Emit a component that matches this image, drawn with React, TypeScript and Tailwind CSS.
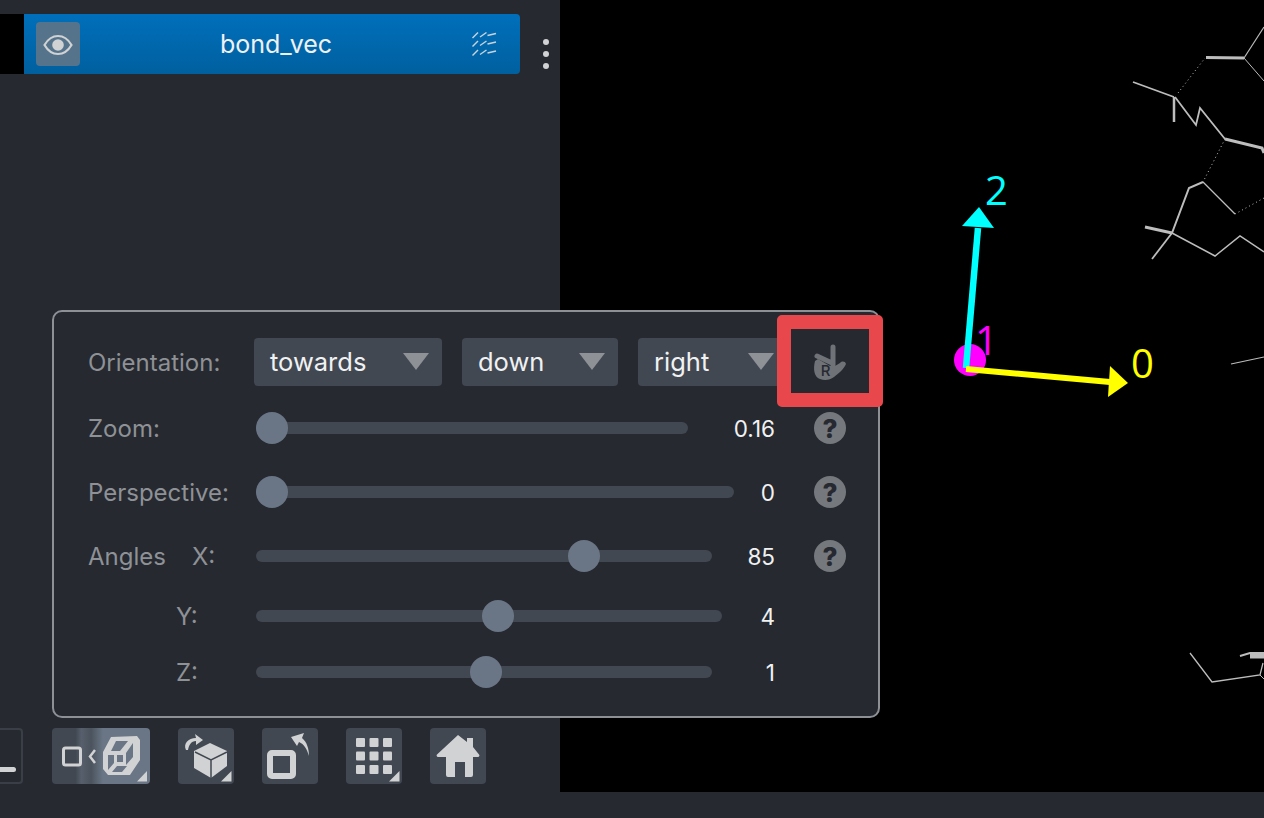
const ink = "#d1d2d3";

function Corner() {
  return <path d="M53.500 43v10.500H43z" fill={ink} />;
}

function Btn({ children, className = "w-14" }: { children: React.ReactNode; className?: string }) {
  return <div className={`h-14 rounded bg-[#414851] shrink-0 ${className}`}>{children}</div>;
}

function EyeIcon() {
  return (
    <svg width="44" height="44" viewBox="0 0 44 44">
      <path d="M8.500 23C12 17 16.500 14 22 14s10 3 13.500 9C32 29 27.500 32 22 32s-10-3-13.500-9z" fill="none" stroke={ink} strokeWidth="2.200" />
      <circle cx="22" cy="23" r="5.800" fill={ink} />
    </svg>
  );
}

function HatchIcon() {
  const rows = [0, 8.500, 17.500];
  return (
    <svg width="26" height="25" viewBox="0 0 26 25" fill="none" stroke="#c9d3dc" strokeWidth="1.400">
      {rows.map((y) => (
        <g key={y}>
          <path d={`M.500 ${y + 6}L6 ${y + .500}`} />
          <path d={`M8 ${y + 5}L14.500 ${y + .500}`} />
          <path d={`M15.500 ${y + 3.500}L24 ${y + 1.500}`} />
        </g>
      ))}
    </svg>
  );
}

function HandIcon() {
  return (
    <svg width="44" height="44" viewBox="0 0 44 44">
      <path d="M25 8v19M9 17l15 7" fill="none" stroke="#6f7378" strokeWidth="5" strokeLinecap="round" />
      <path d="M7 22C5 30 6 38 12 40C17 42 22 41 26 38C31 34 36 30 38 25C37 22 34 22 32 24L27 27H22L10 20z" fill="#6f7378" />
      <text x="17.500" y="36.500" fontSize="15" fontWeight="500" fill="#262930" textAnchor="middle" fontFamily="Inter, sans-serif">R</text>
    </svg>
  );
}

function Help() {
  return (
    <div className="w-8 h-8 rounded-full bg-[#75787d] flex items-center justify-center text-[26px] font-extrabold text-[#262930] shrink-0 ml-[39px]">
      ?
    </div>
  );
}

function Select({ label, className }: { label: string; className: string }) {
  return (
    <div className={`relative h-12 rounded bg-[#414851] pl-4 flex items-center text-[25.500px] text-[#f0f1f2] shrink-0 ${className}`}>
      {label}
      <svg width="26" height="17" viewBox="0 0 26 17" className="absolute left-[var(--tri)] top-[15px]">
        <path d="M0 0h26L13 17z" fill="#8e9196" />
      </svg>
    </div>
  );
}

const sliders = [
  { label: "Zoom:", width: "w-[432px]", pct: 0, value: "0.16", mt: "mt-[26px]", help: true, pad: "" },
  { label: "Perspective:", width: "w-[478px]", pct: 0, value: "0", mt: "mt-8", help: true, pad: "" },
  { label: "Angles", width: "w-[456px]", pct: 72, value: "85", mt: "mt-8", help: true, axis: "X:", pad: "" },
  { label: "Y:", width: "w-[466px]", pct: 52, value: "4", mt: "mt-7", help: false, pad: "pl-[88px]" },
  { label: "Z:", width: "w-[456px]", pct: 50.500, value: "1", mt: "mt-6", help: false, pad: "pl-[88px]" },
];

function Slider({ width, pct }: { width: string; pct: number }) {
  return (
    <div className={`relative h-3 rounded-full bg-[#414851] shrink-0 ${width}`}>
      <div
        className="absolute top-[-10px] w-8 h-8 rounded-full bg-[#6a7686]"
        style={{ left: `calc(${pct}% - ${pct === 0 ? 0 : 16}px)` }}
      />
    </div>
  );
}

function ControlsPanel() {
  return (
    <div className="absolute left-[52px] top-[310px] w-[828px] h-[408px] rounded-[10px] border-2 border-[#8d9196] bg-[#262930] pl-[34px] pr-8 pt-[26px]">
      <div className="flex items-center h-12">
        <div className="w-[166px] shrink-0 pt-[2px] text-[24px] text-[#8e9196]">Orientation:</div>
        <div className="flex gap-5">
          <Select label="towards" className="w-[188px] [--tri:149px]" />
          <Select label="down" className="w-[156px] [--tri:117px]" />
          <Select label="right" className="w-[150px] [--tri:110px]" />
        </div>
      </div>
      {sliders.map((s) => (
        <div key={s.label} className={`flex items-center h-8 ${s.mt}`}>
          <div className={`w-[168px] shrink-0 flex pt-[2px] text-[24px] text-[#8e9196] ${s.pad}`}>
            <span className={s.axis ? "w-[104px]" : ""}>{s.label}</span>
            {s.axis && <span>{s.axis}</span>}
          </div>
          <Slider width={s.width} pct={s.pct} />
          <div className="ml-auto pt-[2px] text-[22.500px] text-[#f0f1f2]">{s.value}</div>
          {s.help ? <Help /> : <div className="w-8 ml-[39px] shrink-0" />}
        </div>
      ))}
      {/* highlight drawn over the screenshot */}
      <div className="absolute left-[723px] top-[3px] w-[106px] h-[92px] rounded-[5px] border-[14px] border-[#e8484c] bg-[#262930] flex items-center justify-center">
        <HandIcon />
      </div>
    </div>
  );
}

function Toolbar() {
  return (
    <div className="flex items-center gap-7 mt-auto mb-2">
      <div className="w-14 h-14 ml-[-33px] mr-[1px] rounded border-2 border-[#3a3f47] relative shrink-0">
        <div className="absolute left-0 top-[37px] w-[47px] h-[5px] rounded-full bg-[#d1d2d3]" />
      </div>
      <Btn className="w-[98px] bg-[linear-gradient(90deg,#414851_0%,#414851_24%,#565f6b_30%,#4b535e_40%,#6a7686_52%,#6a7686_100%)]">
        <svg width="98" height="56" viewBox="0 0 98 56">
          <rect x="11.500" y="20" width="17" height="17" rx="2" fill="none" stroke={ink} strokeWidth="3" />
          <path d="M43 22l-5 6.500 5 6.500" fill="none" stroke={ink} strokeWidth="2.500" />
          <path
            fillRule="evenodd"
            d="M59 9L85 8L88 12V32L78 47H56L51 41V24zM64 13L59 23H68L76 13zM81 15L74 25V37L81 29zM56 27V42L62 35V27zM65 27V34H71V27zM65 38L60 44H70L75 38z"
            fill={ink}
          />
          <path d="M95 43v10.500H85z" fill={ink} />
        </svg>
      </Btn>
      <Btn>
        <svg width="56" height="56" viewBox="0 0 56 56">
          <path d="M32 15l17 8v15L33 50 16 40V23z" fill={ink} />
          <path d="M17 24l16 8 16-8M33 32v18" fill="none" stroke="#414851" strokeWidth="1.500" />
          <path d="M8 22c-3-6 2-12 10-12l-1-4 8 6-7 5v-4c-5 0-7 4-8 9z" fill={ink} />
          <Corner />
        </svg>
      </Btn>
      <Btn>
        <svg width="56" height="56" viewBox="0 0 56 56">
          <rect x="8" y="25" width="23" height="23" rx="2" fill="none" stroke={ink} strokeWidth="6" />
          <path d="M29 9l13-4-2 5c5 4 7 11 7 18-2-7-5-12-10-14l-2 4z" fill={ink} />
        </svg>
      </Btn>
      <Btn>
        <svg width="56" height="56" viewBox="0 0 56 56" fill={ink}>
          {[10, 23.500, 37].map((y) =>
            [10, 23.500, 37].map((x) => <rect key={`${x}-${y}`} x={x} y={y} width="9" height="9" rx="1" />)
          )}
          <Corner />
        </svg>
      </Btn>
      <Btn>
        <svg width="56" height="56" viewBox="0 0 56 56">
          <path d="M28 7l9 7v-4h6v9l6 7.500a1.500 1.500 0 0 1-1 2.500h-5v18a2 2 0 0 1-2 2h-6V34h-10v15h-7a2 2 0 0 1-2-2V29H8a1.500 1.500 0 0 1-1-2.500z" fill={ink} />
        </svg>
      </Btn>
    </div>
  );
}

const bonds: { d: string; w: number; dash?: boolean }[] = [
  { d: "M1133 82L1174 97", w: 1.800 },
  { d: "M1174 97V122", w: 2.500 },
  { d: "M1175 97L1196 125L1200 108L1225 139", w: 1.800 },
  { d: "M1225 139L1262 148L1264 153", w: 3 },
  { d: "M1178 93L1205 58", w: 1, dash: true },
  { d: "M1206 57.500L1244 58", w: 3 },
  { d: "M1244 58L1264 27", w: 1.200 },
  { d: "M1244 58L1264 81", w: 1 },
  { d: "M1225 139L1203 182", w: 1, dash: true },
  { d: "M1172 233L1189 188L1203 182", w: 2 },
  { d: "M1203 182L1235 214", w: 1.300 },
  { d: "M1235 214L1264 198", w: 1, dash: true },
  { d: "M1145 227L1172 233", w: 3 },
  { d: "M1172 233L1152 259", w: 1.800 },
  { d: "M1172 233L1215 256L1240 236L1264 252", w: 1.500 },
  { d: "M1231 364L1264 357", w: 1.200 },
  { d: "M1190 653L1212 682L1260 675L1263 663", w: 1.300 },
  { d: "M1260 675L1264 679", w: 1 },
  { d: "M1240 656L1250 653H1264", w: 2 },
  { d: "M1250 655.500H1264", w: 6 },
];

function Viewer() {
  return (
    <div className="flex-1 h-full bg-black">
      <svg width="704" height="792" viewBox="560 0 704 792" className="block">
        {bonds.map((b) => (
          <path key={b.d} d={b.d} fill="none" stroke="#bdbdbd" strokeWidth={b.w} strokeDasharray={b.dash ? "1 3" : undefined} />
        ))}
        <circle cx="970" cy="360" r="16" fill="#ff00ff" />
        <path d="M966 368L978 228" stroke="#00ffff" strokeWidth="6.500" />
        <path d="M979 207L962 226L994 228z" fill="#00ffff" />
        <path d="M966 369L1110 382" stroke="#ffff00" strokeWidth="6" />
        <path d="M1110 366L1108 397L1128 383z" fill="#ffff00" />
        <g fontFamily="'Open Sans', sans-serif" fontSize="40">
          <text x="985" y="205" fill="#00ffff">2</text>
          <text x="975" y="355" fill="#ff00ff">1</text>
          <text x="1131" y="378" fill="#ffff00">0</text>
        </g>
      </svg>
    </div>
  );
}

export default function App() {
  return (
    <div className="relative w-[1264px] h-[818px] overflow-hidden bg-[#262930] font-['Inter',sans-serif]">
      <div className="flex h-[792px]">
        <div className="w-[560px] h-full flex flex-col overflow-hidden shrink-0">
          <div className="flex items-center mt-[14px] h-[60px]">
            <div className="w-6 h-full bg-black shrink-0" />
            <div className="w-[496px] h-full rounded-r bg-[linear-gradient(180deg,#006fbb_0%,#00609f_100%)] flex items-center pl-3 pr-[22px] shrink-0">
              <div className="w-11 h-11 rounded bg-[#55748c] shrink-0">
                <EyeIcon />
              </div>
              <div className="flex-1 pt-[2px] text-center text-[25px] text-[#f0f1f2]">bond_vec</div>
              <HatchIcon />
            </div>
            <div className="flex flex-col gap-[6px] ml-[23px] mt-5">
              <div className="w-[6px] h-[6px] rounded-full bg-[#d1d2d3]" />
              <div className="w-[6px] h-[6px] rounded-full bg-[#d1d2d3]" />
              <div className="w-[6px] h-[6px] rounded-full bg-[#d1d2d3]" />
            </div>
          </div>
          <Toolbar />
        </div>
        <Viewer />
      </div>
      <ControlsPanel />
    </div>
  );
}
